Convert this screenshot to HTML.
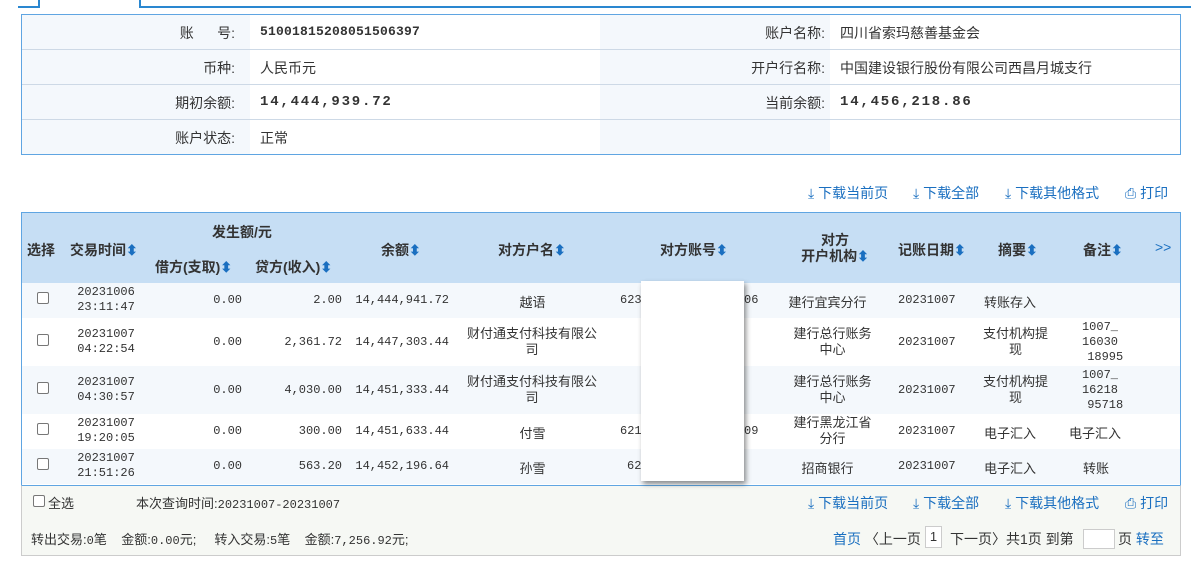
<!DOCTYPE html>
<html><head><meta charset="utf-8"><style>
*{margin:0;padding:0;box-sizing:border-box}
body{width:1191px;height:566px;background:#fff;position:relative;overflow:hidden;font-family:"Liberation Sans","Noto Sans CJK SC",sans-serif;font-size:14px;color:#333}
.a{position:absolute;white-space:nowrap}
.m{font-family:"Liberation Mono","Noto Sans CJK SC",monospace;font-size:12px}
.c{text-align:center}.r{text-align:right}
.cb{position:absolute;width:12px;height:12px;border:1px solid #777;border-radius:2px;background:#fff}
.blue{color:#1a6fc0}
.ar{display:inline-block;width:7px;height:12px;vertical-align:-1px;margin-left:2px}
</style></head><body>
<!-- tab -->
<div class="a" style="left:18px;top:0;width:22px;height:8px;border-right:2px solid #2a87d0;border-bottom:2px solid #2a87d0"></div>
<div class="a" style="left:139px;top:0;width:1052px;height:8px;border-left:2px solid #2a87d0;border-bottom:2px solid #2a87d0"></div>
<!-- info box -->
<div class="a" style="left:21px;top:14px;width:1160px;height:141px;border:1px solid #5fa5e2;background:#fff"></div>
<div class="a" style="left:22px;top:15px;width:228px;height:139px;background:#f4f8fc"></div>
<div class="a" style="left:600px;top:15px;width:230px;height:139px;background:#f4f8fc"></div>
<div class="a" style="left:22px;top:49px;width:1158px;height:1px;background:#cdd9e6"></div>
<div class="a" style="left:22px;top:84px;width:1158px;height:1px;background:#cdd9e6"></div>
<div class="a" style="left:22px;top:119px;width:1158px;height:1px;background:#cdd9e6"></div>
<div class="a r" style="left:100px;width:135px;top:23px">账&nbsp;&nbsp;&nbsp;&nbsp;&nbsp;&nbsp;号:</div>
<div class="a r" style="left:100px;width:135px;top:58px">币种:</div>
<div class="a r" style="left:100px;width:135px;top:93px">期初余额:</div>
<div class="a r" style="left:100px;width:135px;top:128px">账户状态:</div>
<div class="a m" style="left:260px;top:24px;font-size:13px;font-weight:bold;letter-spacing:0.2px">5100181520805150639­7</div>
<div class="a" style="left:260px;top:58px">人民币元</div>
<div class="a m" style="left:260px;top:94px;font-size:14px;font-weight:bold;letter-spacing:1.8px">14,444,939.72</div>
<div class="a" style="left:260px;top:128px">正常</div>
<div class="a r" style="left:680px;width:145px;top:23px">账户名称:</div>
<div class="a r" style="left:680px;width:145px;top:58px">开户行名称:</div>
<div class="a r" style="left:680px;width:145px;top:93px">当前余额:</div>
<div class="a" style="left:840px;top:23px">四川省索玛慈善基金会</div>
<div class="a" style="left:840px;top:58px">中国建设银行股份有限公司西昌月城支行</div>
<div class="a m" style="left:840px;top:94px;font-size:14px;font-weight:bold;letter-spacing:1.8px">14,456,218.86</div>
<!-- top links -->
<div class="a blue" style="left:808px;top:183px">⤓ 下载当前页</div>
<div class="a blue" style="left:913px;top:183px">⤓ 下载全部</div>
<div class="a blue" style="left:1005px;top:183px">⤓ 下载其他格式</div>
<div class="a blue" style="left:1125px;top:183px">⎙ 打印</div>
<!-- table -->
<div class="a" style="left:21px;top:212px;width:1160px;height:344px;border:1px solid #5fa5e2;background:#fff"></div>
<div class="a" style="left:22px;top:213px;width:1158px;height:70px;background:#c6def4"></div>
<div class="a" style="left:22px;top:283px;width:1158px;height:35px;background:#f4f8fc"></div>
<div class="a" style="left:22px;top:366px;width:1158px;height:48px;background:#f4f8fc"></div>
<div class="a" style="left:22px;top:449px;width:1158px;height:35px;background:#f4f8fc"></div>
<div class="a" style="left:21px;top:485px;width:1160px;height:71px;background:#f6f8f4;border:1px solid #ccc;border-top:1px solid #5fa5e2"></div>
<!-- header -->
<div style="font-weight:bold;color:#333">
<div class="a" style="left:27px;top:240px">选择</div>
<div class="a" style="left:70px;top:240px">交易时间<span class="blue">⬍</span></div>
<div class="a" style="left:212px;top:222px">发生额/元</div>
<div class="a" style="left:155px;top:257px">借方(支取)<span class="blue">⬍</span></div>
<div class="a" style="left:255px;top:257px">贷方(收入)<span class="blue">⬍</span></div>
<div class="a" style="left:381px;top:240px">余额<span class="blue">⬍</span></div>
<div class="a" style="left:498px;top:240px">对方户名<span class="blue">⬍</span></div>
<div class="a" style="left:660px;top:240px">对方账号<span class="blue">⬍</span></div>
<div class="a c" style="left:790px;width:90px;top:232px;line-height:16px">对方<br>开户机构<span class="blue">⬍</span></div>
<div class="a" style="left:898px;top:240px">记账日期<span class="blue">⬍</span></div>
<div class="a" style="left:998px;top:240px">摘要<span class="blue">⬍</span></div>
<div class="a" style="left:1083px;top:240px">备注<span class="blue">⬍</span></div>
<div class="a blue" style="left:1155px;top:239px;font-weight:normal">&gt;&gt;</div>
</div>
<!-- rows -->
<div style="font-size:13px">
<!-- r1 -->
<div class="cb" style="left:37px;top:292px"></div>
<div class="a m c" style="left:66px;width:80px;top:285px;line-height:15px">20231006<br>23:11:47</div>
<div class="a m r" style="left:160px;width:82px;top:293px">0.00</div>
<div class="a m r" style="left:260px;width:82px;top:293px">2.00</div>
<div class="a m r" style="left:340px;width:109px;top:293px">14,444,941.72</div>
<div class="a c" style="left:460px;width:145px;top:292px">越语</div>
<div class="a m" style="left:620px;top:293px">623</div><div class="a m" style="left:744px;top:293px">06</div>
<div class="a c" style="left:780px;width:95px;top:292px">建行宜宾分行</div>
<div class="a m" style="left:898px;top:293px">20231007</div>
<div class="a" style="left:984px;top:292px">转账存入</div>
<!-- r2 -->
<div class="cb" style="left:37px;top:334px"></div>
<div class="a m c" style="left:66px;width:80px;top:327px;line-height:15px">20231007<br>04:22:54</div>
<div class="a m r" style="left:160px;width:82px;top:335px">0.00</div>
<div class="a m r" style="left:260px;width:82px;top:335px">2,361.72</div>
<div class="a m r" style="left:340px;width:109px;top:335px">14,447,303.44</div>
<div class="a c" style="left:457px;width:150px;top:326px;line-height:16px">财付通支付科技有限公<br>司</div>
<div class="a c" style="left:780px;width:105px;top:326px;line-height:16px">建行总行账务<br>中心</div>
<div class="a m" style="left:898px;top:335px">20231007</div>
<div class="a c" style="left:978px;width:75px;top:326px;line-height:16px">支付机构提<br>现</div>
<div class="a m c" style="left:1080px;width:40px;top:320px;line-height:15px">1007_<br>16030<br>&nbsp;18995</div>
<!-- r3 -->
<div class="cb" style="left:37px;top:382px"></div>
<div class="a m c" style="left:66px;width:80px;top:375px;line-height:15px">20231007<br>04:30:57</div>
<div class="a m r" style="left:160px;width:82px;top:383px">0.00</div>
<div class="a m r" style="left:260px;width:82px;top:383px">4,030.00</div>
<div class="a m r" style="left:340px;width:109px;top:383px">14,451,333.44</div>
<div class="a c" style="left:457px;width:150px;top:374px;line-height:16px">财付通支付科技有限公<br>司</div>
<div class="a c" style="left:780px;width:105px;top:374px;line-height:16px">建行总行账务<br>中心</div>
<div class="a m" style="left:898px;top:383px">20231007</div>
<div class="a c" style="left:978px;width:75px;top:374px;line-height:16px">支付机构提<br>现</div>
<div class="a m c" style="left:1080px;width:40px;top:368px;line-height:15px">1007_<br>16218<br>&nbsp;95718</div>
<!-- r4 -->
<div class="cb" style="left:37px;top:423px"></div>
<div class="a m c" style="left:66px;width:80px;top:416px;line-height:15px">20231007<br>19:20:05</div>
<div class="a m r" style="left:160px;width:82px;top:424px">0.00</div>
<div class="a m r" style="left:260px;width:82px;top:424px">300.00</div>
<div class="a m r" style="left:340px;width:109px;top:424px">14,451,633.44</div>
<div class="a c" style="left:460px;width:145px;top:423px">付雪</div>
<div class="a m" style="left:620px;top:424px">621</div><div class="a m" style="left:744px;top:424px">09</div>
<div class="a c" style="left:780px;width:105px;top:415px;line-height:16px">建行黑龙江省<br>分行</div>
<div class="a m" style="left:898px;top:424px">20231007</div>
<div class="a" style="left:984px;top:423px">电子汇入</div>
<div class="a" style="left:1069px;top:423px">电子汇入</div>
<!-- r5 -->
<div class="cb" style="left:37px;top:458px"></div>
<div class="a m c" style="left:66px;width:80px;top:451px;line-height:15px">20231007<br>21:51:26</div>
<div class="a m r" style="left:160px;width:82px;top:459px">0.00</div>
<div class="a m r" style="left:260px;width:82px;top:459px">563.20</div>
<div class="a m r" style="left:340px;width:109px;top:459px">14,452,196.64</div>
<div class="a c" style="left:460px;width:145px;top:458px">孙雪</div>
<div class="a m" style="left:627px;top:459px">62</div>
<div class="a c" style="left:780px;width:95px;top:458px">招商银行</div>
<div class="a m" style="left:898px;top:459px">20231007</div>
<div class="a" style="left:984px;top:458px">电子汇入</div>
<div class="a" style="left:1083px;top:458px">转账</div>
</div>
<!-- overlay -->
<div class="a" style="left:641px;top:281px;width:103px;height:200px;background:#fff;box-shadow:2px 3px 5px rgba(0,0,0,.45)"></div>
<!-- footer -->
<div style="font-size:13px">
<div class="cb" style="left:33px;top:495px"></div>
<div class="a" style="left:48px;top:493px">全选</div>
<div class="a" style="left:136px;top:493px">本次查询时间:<span class="m">20231007-20231007</span></div>
<div class="a blue" style="left:808px;top:493px;font-size:14px">⤓ 下载当前页</div>
<div class="a blue" style="left:913px;top:493px;font-size:14px">⤓ 下载全部</div>
<div class="a blue" style="left:1005px;top:493px;font-size:14px">⤓ 下载其他格式</div>
<div class="a blue" style="left:1125px;top:493px;font-size:14px">⎙ 打印</div>
<div class="a" style="left:31px;top:529px">转出交易:<span class="m">0</span>笔&nbsp;&nbsp;&nbsp;&nbsp;金额:<span class="m">0.00</span>元;&nbsp;&nbsp;&nbsp;&nbsp;&nbsp;转入交易:<span class="m">5</span>笔&nbsp;&nbsp;&nbsp;&nbsp;金额:<span class="m">7,256.92</span>元;</div>
<div class="a" style="left:833px;top:529px;font-size:14px"><span class="blue">首页</span> 〈上一页</div>
<div class="a c" style="left:925px;top:526px;width:17px;height:22px;border:1px solid #ccc;background:#fff;line-height:20px">1</div>
<div class="a" style="left:950px;top:529px;font-size:14px">下一页〉共1页 到第</div>
<div class="a" style="left:1083px;top:529px;width:32px;height:20px;border:1px solid #ccc;background:#fff"></div>
<div class="a" style="left:1118px;top:529px;font-size:14px">页 <span class="blue">转至</span></div>
</div>
</body></html>
